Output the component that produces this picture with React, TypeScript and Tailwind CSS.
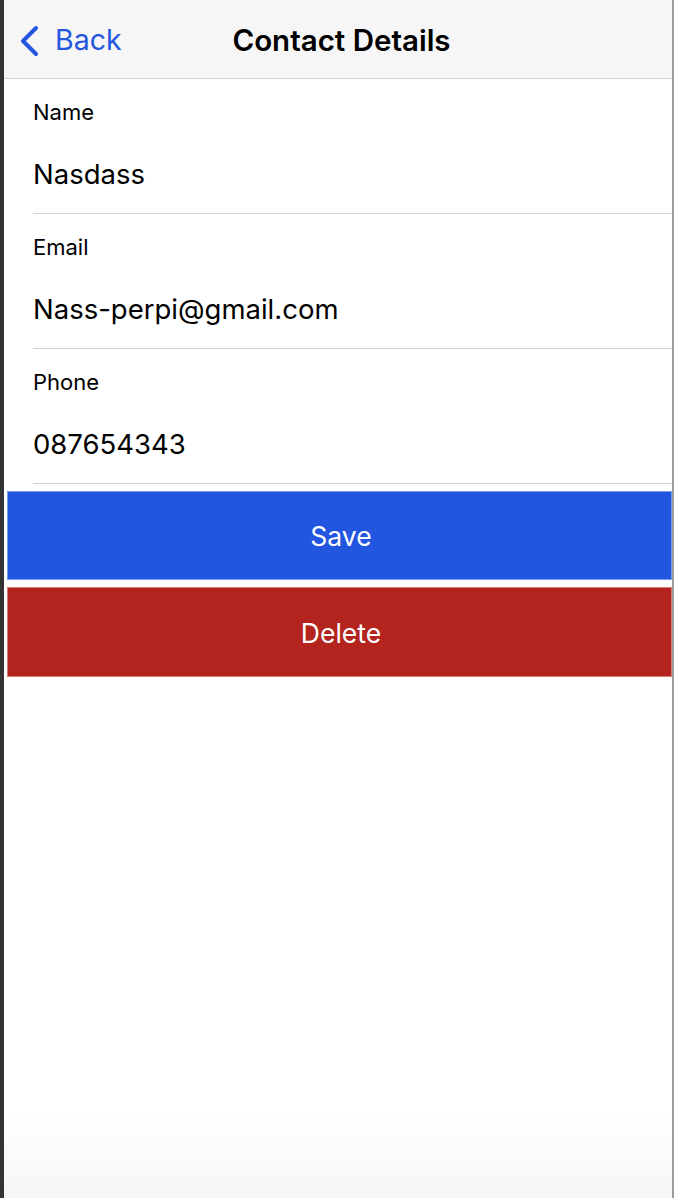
const fields = [
  { label: "Name", value: "Nasdass" },
  { label: "Email", value: "Nass-perpi@gmail.com" },
  { label: "Phone", value: "087654343" },
];

export default function App() {
  return (
    <div
      className="flex h-[1198px] w-[674px] bg-white text-black"
      style={{ fontFamily: "Inter, 'Liberation Sans', sans-serif" }}
    >
      <div className="w-[4px] shrink-0 bg-[#333333]" />
      <div className="flex flex-1 flex-col bg-gradient-to-b from-white from-93% to-[#f6f6f6]">
        <header className="relative flex h-[79px] shrink-0 items-center border-b border-[#d0d0d0] bg-[#f6f6f6] pt-[3px]">
          <div className="flex items-center pl-[14px] text-[#2456e0]">
            <svg width="22" height="32" viewBox="0 0 22 32" fill="none" className="mr-[15px]">
              <path d="M18 3 L5 16 L18 29" stroke="currentColor" strokeWidth="4" strokeLinecap="round" strokeLinejoin="round" />
            </svg>
            <span className="text-[28.5px] leading-none">Back</span>
          </div>
          <h1 className="absolute left-0 right-0 pl-[7px] text-center text-[29.5px] font-semibold leading-none">
            Contact Details
          </h1>
        </header>

        <div className="flex flex-col">
          {fields.map((f) => (
            <div key={f.label} className="ml-[29px] flex h-[135px] flex-col border-b border-[#d4d4d4]">
              <span className="mt-[20px] text-[22px] leading-[26px]">{f.label}</span>
              <span className="mt-[33px] text-[27.5px] leading-[32px]">{f.value}</span>
            </div>
          ))}
        </div>

        <div className="mt-[7px] flex flex-col gap-[7px] pl-[3px]">
          <button className="h-[89px] border border-[#7a9af0] bg-[#2255e0] pl-[3px] pt-[3px] text-[26.5px] text-white">
            Save
          </button>
          <button className="h-[90px] border border-[#d77c78] bg-[#b3241f] pl-[3px] pt-[3px] text-[26.5px] text-white">
            Delete
          </button>
        </div>
      </div>
      <div className="w-[2px] shrink-0 bg-[#9c9c9c]" />
    </div>
  );
}
